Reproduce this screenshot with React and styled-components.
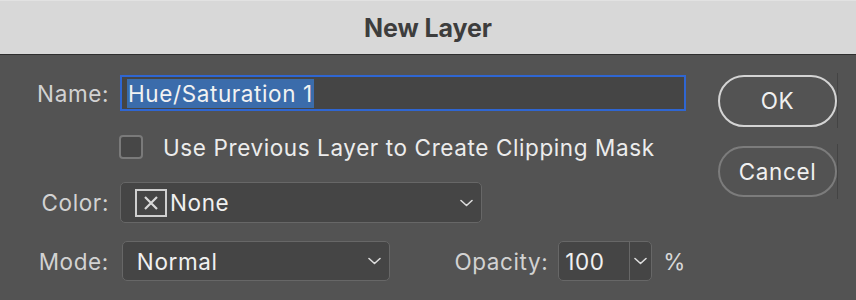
import React from 'react'
import styled, { createGlobalStyle } from 'styled-components'

const Global = createGlobalStyle`
  html, body {
    margin: 0;
    padding: 0;
    background: #535353;
  }
  body {
    font-family: Inter, "Noto Sans", "Liberation Sans", sans-serif;
  }
`

const Dialog = styled.div`
  width: 856px;
  height: 300px;
  background: #535353;
  overflow: hidden;
`

const TitleBar = styled.div`
  height: 55px;
  background: #d8d8d8;
  border-top: 1px solid #e2e2e2;
  box-sizing: border-box;
  border-bottom: 1px solid #2e2e2e;
  display: flex;
  align-items: center;
  justify-content: center;
  font-size: 25px;
  font-weight: 700;
  color: #3d3d3d;
  letter-spacing: -0.1px;
`

const Body = styled.div`
  display: flex;
  padding: 20px 0 0 0;
  font-size: 22.5px;
  letter-spacing: 0.6px;
`

const Form = styled.div`
  display: flex;
  flex-direction: column;
  width: 686px;
`

const Row = styled.div`
  display: flex;
  align-items: center;
  height: ${p => p.h}px;
  margin-top: ${p => p.mt || 0}px;
`

const Label = styled.span`
  width: 109px;
  margin-right: 11px;
  text-align: right;
  color: #d2d2d2;
`

const NameField = styled.div`
  flex: 1;
  height: 36px;
  box-sizing: border-box;
  border: 2px solid #2f66d2;
  background: #454545;
  display: flex;
  align-items: center;
  padding: 0 5px;
`

const Selected = styled.span`
  background: #3b6cab;
  color: #f2f2f2;
  line-height: 29px;
  padding: 0 1px 0 1px;
`

const CheckRow = styled.label`
  display: flex;
  align-items: center;
  gap: 20px;
  margin-left: 119px;
  color: #ececec;
`

const Box = styled.span`
  width: 24px;
  height: 24px;
  box-sizing: border-box;
  border: 2px solid #7a7a7a;
  border-radius: 4px;
  background: #474747;
`

const Select = styled.div`
  width: ${p => p.w}px;
  height: ${p => p.h}px;
  margin-left: ${p => p.ml || 0}px;
  box-sizing: border-box;
  border: 1.5px solid #676767;
  border-radius: 5px;
  background: #454545;
  display: flex;
  align-items: center;
  padding: 0 8px 0 ${p => p.pl}px;
  color: #f0f0f0;
`

const Value = styled.span`
  flex: 1;
`

const Swatch = styled.span`
  width: 32px;
  height: 28px;
  box-sizing: border-box;
  border: 2px solid #cfcfcf;
  display: flex;
  align-items: center;
  justify-content: center;
  margin-right: 3px;
`

const OpacityGroup = styled.div`
  display: flex;
  align-items: center;
  margin-left: 64px;
`

const OpacityLabel = styled.span`
  color: #d2d2d2;
  margin-right: 10px;
`

const Combo = styled.div`
  display: flex;
  width: 94px;
  height: 40px;
  box-sizing: border-box;
  border: 1.5px solid #676767;
  border-radius: 5px;
  background: #454545;
  overflow: hidden;
`

const ComboValue = styled.span`
  width: 64px;
  border-right: 1.5px solid #676767;
  display: flex;
  align-items: center;
  padding-left: 6px;
  color: #f0f0f0;
`

const ComboArrow = styled.span`
  flex: 1;
  display: flex;
  align-items: center;
  justify-content: center;
`

const Percent = styled.span`
  margin-left: 11px;
  color: #d8d8d8;
`

const Buttons = styled.div`
  display: flex;
  flex-direction: column;
  gap: 18px;
  margin-left: 32px;
`

const ButtonWrap = styled.div`
  display: flex;
  align-items: center;
  height: 55px;
  margin-top: -2px;
  border-right: 1px solid #444;
`

const Button = styled.button`
  width: 119px;
  height: ${p => p.h}px;
  border-radius: 26px;
  box-sizing: border-box;
  border: 2px solid ${p => (p.primary ? '#d4d4d4' : '#7c7c7c')};
  background: #535353;
  color: #f0f0f0;
  font-family: inherit;
  font-size: 22.5px;
  letter-spacing: 0.6px;
  padding: 0;
`

const Chevron = () => (
  <svg width="13" height="8" viewBox="0 0 13 8">
    <path d="M1 1.5l5.5 5 5.5-5" fill="none" stroke="#dcdcdc" strokeWidth="1.6" strokeLinecap="round" strokeLinejoin="round" />
  </svg>
)

const Cross = () => (
  <svg width="18" height="18" viewBox="0 0 18 18">
    <path d="M3 3l12 12M15 3L3 15" stroke="#d8d8d8" strokeWidth="2.2" />
  </svg>
)

const App = () => (
  <Dialog>
    <Global />
    <TitleBar>New Layer</TitleBar>
    <Body>
      <Form>
        <Row h={36}>
          <Label>Name:</Label>
          <NameField>
            <Selected>Hue/Saturation 1</Selected>
          </NameField>
        </Row>
        <Row h={24} mt={24}>
          <CheckRow>
            <Box />
            Use Previous Layer to Create Clipping Mask
          </CheckRow>
        </Row>
        <Row h={41} mt={23}>
          <Label>Color:</Label>
          <Select w={362} h={41} pl={14}>
            <Swatch><Cross /></Swatch>
            <Value>None</Value>
            <Chevron />
          </Select>
        </Row>
        <Row h={40} mt={18}>
          <Label>Mode:</Label>
          <Select w={269} h={40} pl={14} ml={2}>
            <Value>Normal</Value>
            <Chevron />
          </Select>
          <OpacityGroup>
            <OpacityLabel>Opacity:</OpacityLabel>
            <Combo>
              <ComboValue>100</ComboValue>
              <ComboArrow><Chevron /></ComboArrow>
            </Combo>
            <Percent>%</Percent>
          </OpacityGroup>
        </Row>
      </Form>
      <Buttons>
        <ButtonWrap>
          <Button primary h={52}>OK</Button>
        </ButtonWrap>
        <ButtonWrap>
          <Button h={51}>Cancel</Button>
        </ButtonWrap>
      </Buttons>
    </Body>
  </Dialog>
)

export default App
